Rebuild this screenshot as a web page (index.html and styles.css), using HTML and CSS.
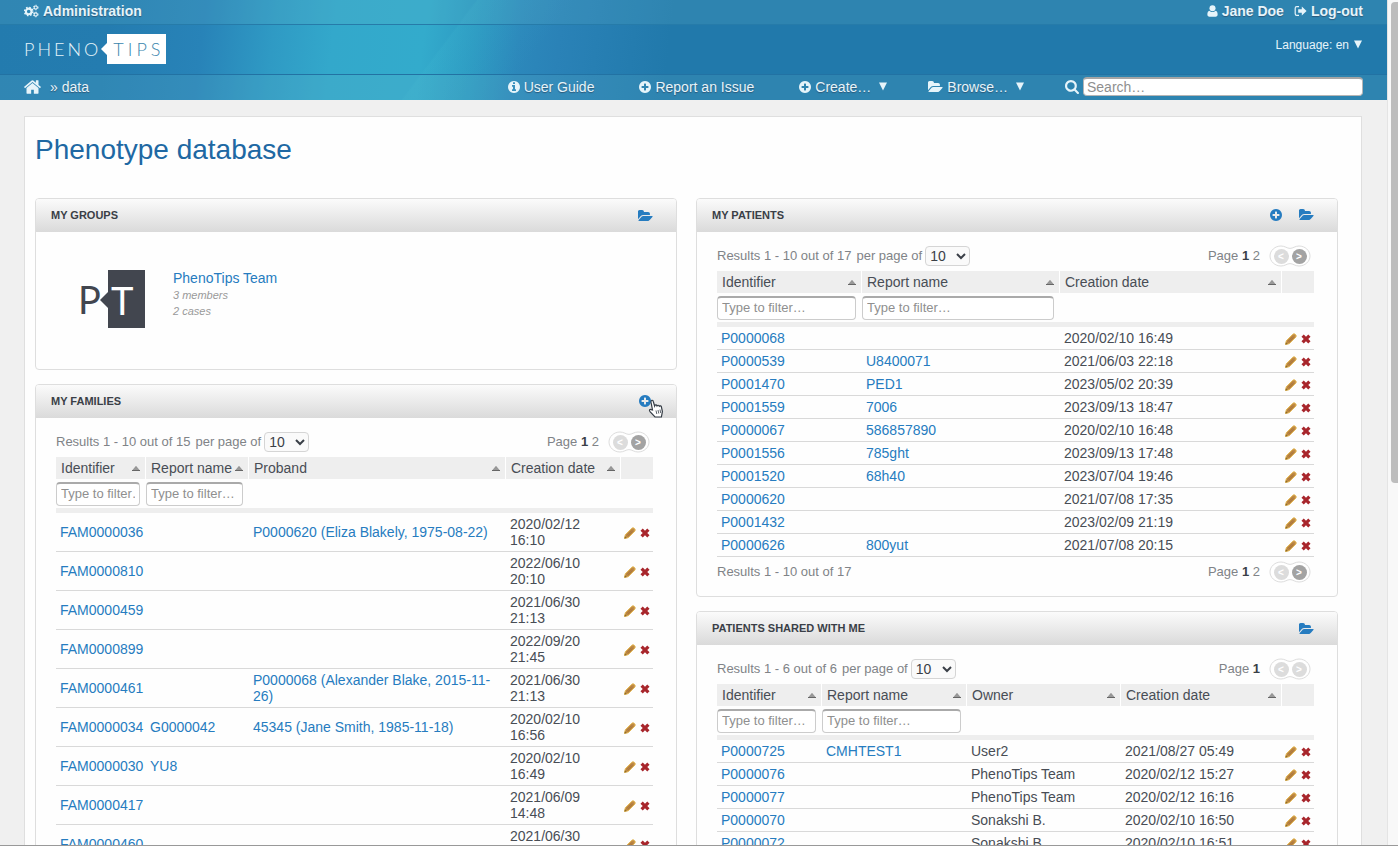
FILE: index.html
```html
<!DOCTYPE html>
<html lang="en">
<head>
    <meta charset="UTF-8">
    <meta name="viewport" content="width=device-width, initial-scale=1.0">
    <title>Phenotype database</title>
    <link rel="stylesheet" href="styles.css">
</head>
<body>
    <!-- Icon definitions -->
    <svg class="icon-defs" aria-hidden="true">
        <symbol id="i-cogs" viewBox="0 0 16 14">
            <circle cx="5" cy="7.500" r="3" fill="none" stroke="currentColor" stroke-width="2.200"/>
            <circle cx="5" cy="7.500" r="4.400" fill="none" stroke="currentColor" stroke-width="1.600" stroke-dasharray="1.730 1.730"/>
            <circle cx="12.500" cy="3.300" r="1.700" fill="none" stroke="currentColor" stroke-width="1.200"/>
            <circle cx="12.500" cy="3.300" r="2.500" fill="none" stroke="currentColor" stroke-width="1" stroke-dasharray="1.300 1.300"/>
            <circle cx="12.500" cy="10.700" r="1.700" fill="none" stroke="currentColor" stroke-width="1.200"/>
            <circle cx="12.500" cy="10.700" r="2.500" fill="none" stroke="currentColor" stroke-width="1" stroke-dasharray="1.300 1.300"/>
        </symbol>
        <symbol id="i-user" viewBox="0 0 12 13">
            <circle cx="6" cy="3.600" r="3.300"/>
            <path d="M2.600 6.200C1 6.500.4 8.300.4 10.400c0 1.500.9 2.400 2.200 2.400h6.800c1.300 0 2.200-.9 2.200-2.400 0-2.100-.6-3.900-2.200-4.200C8.500 7.200 7.300 7.700 6 7.700S3.500 7.200 2.600 6.200z"/>
        </symbol>
        <symbol id="i-logout" viewBox="0 0 13 12">
            <path d="M5 1.700H2.800Q1.200 1.700 1.200 3.300v5.400q0 1.600 1.600 1.600H5" fill="none" stroke="currentColor" stroke-width="1.200"/>
            <path d="M4.200 4.200h3.600V1.600L12.600 6 7.800 10.400V7.800H4.200z"/>
        </symbol>
        <symbol id="i-home" viewBox="80 253 1632 1283">
            <path d="M1472 992v480q0 26-19 45t-45 19h-384v-384h-256v384h-384q-26 0-45-19t-19-45v-480q0-1 .5-3t.5-3l575-474 575 474q1 2 1 6zm223-69l-62 74q-8 9-21 11h-3q-13 0-21-7l-692-577-692 577q-12 8-24 7-13-2-21-11l-62-74q-8-10-7-23.500t11-21.500l719-599q32-26 76-26t76 26l244 204v-195q0-14 9-23t23-9h192q14 0 23 9t9 23v408l219 182q10 8 11 21.500t-7 23.500z"/>
        </symbol>
        <symbol id="i-info" viewBox="128 128 1536 1536">
            <path d="M1152 1376v-160q0-14-9-23t-23-9h-96v-512q0-14-9-23t-23-9h-320q-14 0-23 9t-9 23v160q0 14 9 23t23 9h96v320h-96q-14 0-23 9t-9 23v160q0 14 9 23t23 9h448q14 0 23-9t9-23zm-128-896v-160q0-14-9-23t-23-9h-192q-14 0-23 9t-9 23v160q0 14 9 23t23 9h192q14 0 23-9t9-23zm640 416q0 209-103 385.500t-279.500 279.500-385.500 103-385.500-103-279.500-279.500-103-385.500 103-385.500 279.500-279.500 385.500-103 385.500 103 279.500 279.500 103 385.500z"/>
        </symbol>
        <symbol id="i-plus" viewBox="128 128 1536 1536">
            <path d="M1344 960v-128q0-26-19-45t-45-19h-256v-256q0-26-19-45t-45-19h-128q-26 0-45 19t-19 45v256h-256q-26 0-45 19t-19 45v128q0 26 19 45t45 19h256v256q0 26 19 45t45 19h128q26 0 45-19t19-45v-256h256q26 0 45-19t19-45zm320-64q0 209-103 385.500t-279.500 279.500-385.500 103-385.500-103-279.500-279.500-103-385.500 103-385.500 279.500-279.500 385.500-103 385.500 103 279.500 279.500 103 385.500z"/>
        </symbol>
        <symbol id="i-folder" viewBox="0 128 1815 1408">
            <path d="M1815 952q0 31-31 66l-336 396q-43 51-120.500 86.500t-143.500 35.500h-1088q-34 0-60.500-13t-26.500-43q0-31 31-66l336-396q43-51 120.500-86.500t143.500-35.500h1088q34 0 60.500 13t26.500 43zm-343-344v160h-832q-94 0-197 47.500t-164 119.500l-337 396-5 6q0-4-.5-12.500t-.5-12.500v-960q0-92 66-158t158-66h320q92 0 158 66t66 158v32h544q92 0 158 66t66 158z"/>
        </symbol>
        <symbol id="i-search" viewBox="64 128 1664 1664">
            <path d="M1216 832q0-185-131.500-316.500t-316.500-131.500-316.500 131.500-131.500 316.500 131.500 316.500 316.500 131.500 316.500-131.500 131.500-316.500zm512 832q0 52-38 90t-90 38q-54 0-90-38l-343-342q-179 124-399 124-143 0-273.500-55.500t-225-150-150-225-55.500-273.500 55.500-273.500 150-225 225-150 273.500-55.500 273.500 55.500 225 150 150 225 55.500 273.500q0 220-124 399l343 343q37 37 37 90z"/>
        </symbol>
        <symbol id="i-down" viewBox="0 0 10 9">
            <path d="M1 .5h8L5 8.500z"/>
        </symbol>
        <symbol id="i-sort" viewBox="0 0 8 5">
            <path d="M4 .3L7.500 4.500h-7z" fill="#999" stroke="#777" stroke-width=".5"/>
            <path d="M0 4.500h8" stroke="#666" stroke-width="1"/>
        </symbol>
        <symbol id="i-edit" viewBox="0 0 12 12">
            <path d="M.5 11.500L1.300 7.800 7.800 1.300q1.200-1.100 2.400 0l.5.5q1.100 1.200 0 2.400L4.200 10.700z" fill="#c08a45" stroke="#e3b64f" stroke-width="1"/>
            <path d="M2.800 8.600L8 3.400M3.900 9.400l5-5" stroke="#a06c38" stroke-width=".8"/>
            <path d="M.4 11.600l.6-2.400 1.800 1.800z" fill="#8a6a2c"/>
        </symbol>
        <symbol id="i-delete" viewBox="0 0 10 10">
            <path d="M1.600 1.600l6.800 6.800M8.400 1.600L1.600 8.400" stroke="#a8262c" stroke-width="3.200"/>
        </symbol>
        <symbol id="i-pager" viewBox="0 0 42 22">
            <path d="M12 1C6 1 1 5.500 1 11s5 10 11 10c4 0 6-2.400 9-2.400s5 2.400 9 2.400c6 0 11-4.500 11-10S36 1 30 1c-4 0-6 2.400-9 2.400S16 1 12 1z" fill="#fff" stroke="#ddd"/>
        </symbol>
    </svg>

    <div class="page">
        <header class="site-header">
            <div class="top-bar">
                <a href="#" class="header-link"><svg class="icon-cogs"><use href="#i-cogs"/></svg>Administration</a>
                <div class="user-links">
                    <a href="#" class="header-link"><svg class="icon-user"><use href="#i-user"/></svg>Jane Doe</a>
                    <a href="#" class="header-link"><svg class="icon-logout"><use href="#i-logout"/></svg>Log-out</a>
                </div>
            </div>
            <div class="brand-bar">
                <a href="#" class="brand"><span class="brand-left">PHENO</span><svg class="brand-arrow" viewBox="0 0 6 12"><path d="M6 0v12L0 6z"/></svg><span class="brand-right">TIPS</span></a>
                <button type="button" class="language">Language: en <svg class="icon-down"><use href="#i-down"/></svg></button>
            </div>
            <nav class="nav-bar">
                <div class="breadcrumb">
                    <a href="#" aria-label="Home"><svg class="icon-home"><use href="#i-home"/></svg></a>
                    <span>» <a href="#">data</a></span>
                </div>
                <div class="nav-items">
                    <a href="#" class="nav-link"><svg class="icon-round"><use href="#i-info"/></svg>User Guide</a>
                    <a href="#" class="nav-link"><svg class="icon-round"><use href="#i-plus"/></svg>Report an Issue</a>
                    <button type="button" class="nav-menu"><svg class="icon-round"><use href="#i-plus"/></svg>Create… <svg class="icon-down"><use href="#i-down"/></svg></button>
                    <button type="button" class="nav-menu"><svg class="icon-folder"><use href="#i-folder"/></svg>Browse… <svg class="icon-down"><use href="#i-down"/></svg></button>
                    <form class="search">
                        <label for="search" aria-label="Search"><svg class="icon-search"><use href="#i-search"/></svg></label>
                        <input type="text" id="search" placeholder="Search…">
                    </form>
                </div>
            </nav>
        </header>

        <main class="content">
            <h1>Phenotype database</h1>
            <div class="dashboard">
                <div class="column">
                    <section class="gadget">
                        <div class="gadget-head">
                            <h2>MY GROUPS</h2>
                            <div class="gadget-actions">
                                <a href="#" aria-label="Browse groups"><svg class="icon-folder"><use href="#i-folder"/></svg></a>
                            </div>
                        </div>
                        <div class="group">
                            <svg class="group-logo" viewBox="0 0 65 58">
                                <path d="M28 0h37v58H28V38l-8-8 8-8z" fill="#42464f"/>
                                <text x="-2" y="44" class="group-logo-p">P</text>
                                <text x="31" y="45" class="group-logo-t">T</text>
                            </svg>
                            <div class="group-info">
                                <a href="#">PhenoTips Team</a>
                                <em>3 members</em>
                                <em>2 cases</em>
                            </div>
                        </div>
                    </section>

                    <section class="gadget">
                        <div class="gadget-head">
                            <h2>MY FAMILIES</h2>
                            <div class="gadget-actions">
                                <a href="#" class="hovered" aria-label="New family"><svg class="icon-round"><use href="#i-plus"/></svg>
                                    <svg class="cursor" viewBox="0 0 16 19"><path d="M4.500 11L3 3.200C2.700 1 4.800.5 5.300 2.500L6.600 7c.5-1.500 2-1.300 2.400-.1.600-1 1.900-.8 2.300.3.800-.7 1.900-.3 2.100.8l1 4.500-1 5.500H7L2 12.700C.8 11 2 9.800 3.200 10.600z" fill="#fff" stroke="#333b44" stroke-width="1.200"/><path d="M8 11.500l.8 3.500M10 11l.8 3.500M12 10.500l.7 3.500" stroke="#333b44" stroke-width=".8"/></svg></a>
                            </div>
                        </div>
                        <div class="gadget-body">
                            <div class="pagination">
                                <span>Results 1 - 10 out of 15</span>
                                <label>per page of <select><option>10</option></select></label>
                                <span class="page-list">Page <b>1</b> 2</span>
                                <span class="pager"><svg><use href="#i-pager"/></svg><button type="button" disabled>&lt;</button><button type="button">&gt;</button></span>
                            </div>
                            <table>
                                <colgroup><col class="w-90"><col class="w-103"><col><col class="w-115"><col class="w-32"></colgroup>
                                <thead>
                                    <tr class="titles">
                                        <th><button type="button">Identifier<svg><use href="#i-sort"/></svg></button></th>
                                        <th><button type="button">Report name<svg><use href="#i-sort"/></svg></button></th>
                                        <th><button type="button">Proband<svg><use href="#i-sort"/></svg></button></th>
                                        <th><button type="button">Creation date<svg><use href="#i-sort"/></svg></button></th>
                                        <th></th>
                                    </tr>
                                    <tr class="filters">
                                        <td><input type="text" aria-label="Filter by identifier" placeholder="Type to filter…"></td>
                                        <td><input type="text" aria-label="Filter by report name" placeholder="Type to filter…"></td>
                                        <td></td>
                                        <td></td>
                                        <td></td>
                                    </tr>
                                </thead>
                                <tbody>
                                    <tr><td><a href="#">FAM0000036</a></td><td></td><td><a href="#">P0000620 (Eliza Blakely, 1975-08-22)</a></td><td>2020/02/12 16:10</td><td class="actions"><a href="#" aria-label="Edit"><svg><use href="#i-edit"/></svg></a><a href="#" aria-label="Delete"><svg><use href="#i-delete"/></svg></a></td></tr>
                                    <tr><td><a href="#">FAM0000810</a></td><td></td><td></td><td>2022/06/10 20:10</td><td class="actions"><a href="#" aria-label="Edit"><svg><use href="#i-edit"/></svg></a><a href="#" aria-label="Delete"><svg><use href="#i-delete"/></svg></a></td></tr>
                                    <tr><td><a href="#">FAM0000459</a></td><td></td><td></td><td>2021/06/30 21:13</td><td class="actions"><a href="#" aria-label="Edit"><svg><use href="#i-edit"/></svg></a><a href="#" aria-label="Delete"><svg><use href="#i-delete"/></svg></a></td></tr>
                                    <tr><td><a href="#">FAM0000899</a></td><td></td><td></td><td>2022/09/20 21:45</td><td class="actions"><a href="#" aria-label="Edit"><svg><use href="#i-edit"/></svg></a><a href="#" aria-label="Delete"><svg><use href="#i-delete"/></svg></a></td></tr>
                                    <tr><td><a href="#">FAM0000461</a></td><td></td><td><a href="#">P0000068 (Alexander Blake, 2015-11-26)</a></td><td>2021/06/30 21:13</td><td class="actions"><a href="#" aria-label="Edit"><svg><use href="#i-edit"/></svg></a><a href="#" aria-label="Delete"><svg><use href="#i-delete"/></svg></a></td></tr>
                                    <tr><td><a href="#">FAM0000034</a></td><td><a href="#">G0000042</a></td><td><a href="#">45345 (Jane Smith, 1985-11-18)</a></td><td>2020/02/10 16:56</td><td class="actions"><a href="#" aria-label="Edit"><svg><use href="#i-edit"/></svg></a><a href="#" aria-label="Delete"><svg><use href="#i-delete"/></svg></a></td></tr>
                                    <tr><td><a href="#">FAM0000030</a></td><td><a href="#">YU8</a></td><td></td><td>2020/02/10 16:49</td><td class="actions"><a href="#" aria-label="Edit"><svg><use href="#i-edit"/></svg></a><a href="#" aria-label="Delete"><svg><use href="#i-delete"/></svg></a></td></tr>
                                    <tr><td><a href="#">FAM0000417</a></td><td></td><td></td><td>2021/06/09 14:48</td><td class="actions"><a href="#" aria-label="Edit"><svg><use href="#i-edit"/></svg></a><a href="#" aria-label="Delete"><svg><use href="#i-delete"/></svg></a></td></tr>
                                    <tr><td><a href="#">FAM0000460</a></td><td></td><td></td><td>2021/06/30 21:13</td><td class="actions"><a href="#" aria-label="Edit"><svg><use href="#i-edit"/></svg></a><a href="#" aria-label="Delete"><svg><use href="#i-delete"/></svg></a></td></tr>
                                </tbody>
                            </table>
                        </div>
                    </section>
                </div>

                <div class="column">
                    <section class="gadget">
                        <div class="gadget-head">
                            <h2>MY PATIENTS</h2>
                            <div class="gadget-actions">
                                <a href="#" aria-label="New patient"><svg class="icon-round"><use href="#i-plus"/></svg></a>
                                <a href="#" aria-label="Browse patients"><svg class="icon-folder"><use href="#i-folder"/></svg></a>
                            </div>
                        </div>
                        <div class="gadget-body">
                            <div class="pagination">
                                <span>Results 1 - 10 out of 17</span>
                                <label>per page of <select><option>10</option></select></label>
                                <span class="page-list">Page <b>1</b> 2</span>
                                <span class="pager"><svg><use href="#i-pager"/></svg><button type="button" disabled>&lt;</button><button type="button">&gt;</button></span>
                            </div>
                            <table>
                                <colgroup><col class="w-145"><col class="w-198"><col><col class="w-32"></colgroup>
                                <thead>
                                    <tr class="titles">
                                        <th><button type="button">Identifier<svg><use href="#i-sort"/></svg></button></th>
                                        <th><button type="button">Report name<svg><use href="#i-sort"/></svg></button></th>
                                        <th><button type="button">Creation date<svg><use href="#i-sort"/></svg></button></th>
                                        <th></th>
                                    </tr>
                                    <tr class="filters">
                                        <td><input type="text" aria-label="Filter by identifier" placeholder="Type to filter…"></td>
                                        <td><input type="text" aria-label="Filter by report name" placeholder="Type to filter…"></td>
                                        <td></td>
                                        <td></td>
                                    </tr>
                                </thead>
                                <tbody>
                                    <tr><td><a href="#">P0000068</a></td><td></td><td>2020/02/10 16:49</td><td class="actions"><a href="#" aria-label="Edit"><svg><use href="#i-edit"/></svg></a><a href="#" aria-label="Delete"><svg><use href="#i-delete"/></svg></a></td></tr>
                                    <tr><td><a href="#">P0000539</a></td><td><a href="#">U8400071</a></td><td>2021/06/03 22:18</td><td class="actions"><a href="#" aria-label="Edit"><svg><use href="#i-edit"/></svg></a><a href="#" aria-label="Delete"><svg><use href="#i-delete"/></svg></a></td></tr>
                                    <tr><td><a href="#">P0001470</a></td><td><a href="#">PED1</a></td><td>2023/05/02 20:39</td><td class="actions"><a href="#" aria-label="Edit"><svg><use href="#i-edit"/></svg></a><a href="#" aria-label="Delete"><svg><use href="#i-delete"/></svg></a></td></tr>
                                    <tr><td><a href="#">P0001559</a></td><td><a href="#">7006</a></td><td>2023/09/13 18:47</td><td class="actions"><a href="#" aria-label="Edit"><svg><use href="#i-edit"/></svg></a><a href="#" aria-label="Delete"><svg><use href="#i-delete"/></svg></a></td></tr>
                                    <tr><td><a href="#">P0000067</a></td><td><a href="#">586857890</a></td><td>2020/02/10 16:48</td><td class="actions"><a href="#" aria-label="Edit"><svg><use href="#i-edit"/></svg></a><a href="#" aria-label="Delete"><svg><use href="#i-delete"/></svg></a></td></tr>
                                    <tr><td><a href="#">P0001556</a></td><td><a href="#">785ght</a></td><td>2023/09/13 17:48</td><td class="actions"><a href="#" aria-label="Edit"><svg><use href="#i-edit"/></svg></a><a href="#" aria-label="Delete"><svg><use href="#i-delete"/></svg></a></td></tr>
                                    <tr><td><a href="#">P0001520</a></td><td><a href="#">68h40</a></td><td>2023/07/04 19:46</td><td class="actions"><a href="#" aria-label="Edit"><svg><use href="#i-edit"/></svg></a><a href="#" aria-label="Delete"><svg><use href="#i-delete"/></svg></a></td></tr>
                                    <tr><td><a href="#">P0000620</a></td><td></td><td>2021/07/08 17:35</td><td class="actions"><a href="#" aria-label="Edit"><svg><use href="#i-edit"/></svg></a><a href="#" aria-label="Delete"><svg><use href="#i-delete"/></svg></a></td></tr>
                                    <tr><td><a href="#">P0001432</a></td><td></td><td>2023/02/09 21:19</td><td class="actions"><a href="#" aria-label="Edit"><svg><use href="#i-edit"/></svg></a><a href="#" aria-label="Delete"><svg><use href="#i-delete"/></svg></a></td></tr>
                                    <tr><td><a href="#">P0000626</a></td><td><a href="#">800yut</a></td><td>2021/07/08 20:15</td><td class="actions"><a href="#" aria-label="Edit"><svg><use href="#i-edit"/></svg></a><a href="#" aria-label="Delete"><svg><use href="#i-delete"/></svg></a></td></tr>
                                </tbody>
                            </table>
                            <div class="pagination pagination-bottom">
                                <span>Results 1 - 10 out of 17</span>
                                <span class="page-list">Page <b>1</b> 2</span>
                                <span class="pager"><svg><use href="#i-pager"/></svg><button type="button" disabled>&lt;</button><button type="button">&gt;</button></span>
                            </div>
                        </div>
                    </section>

                    <section class="gadget">
                        <div class="gadget-head">
                            <h2>PATIENTS SHARED WITH ME</h2>
                            <div class="gadget-actions">
                                <a href="#" aria-label="Browse shared patients"><svg class="icon-folder"><use href="#i-folder"/></svg></a>
                            </div>
                        </div>
                        <div class="gadget-body">
                            <div class="pagination">
                                <span>Results 1 - 6 out of 6</span>
                                <label>per page of <select><option>10</option></select></label>
                                <span class="page-list">Page <b>1</b></span>
                                <span class="pager"><svg><use href="#i-pager"/></svg><button type="button" disabled>&lt;</button><button type="button" disabled>&gt;</button></span>
                            </div>
                            <table>
                                <colgroup><col class="w-105"><col class="w-145"><col class="w-154"><col><col class="w-32"></colgroup>
                                <thead>
                                    <tr class="titles">
                                        <th><button type="button">Identifier<svg><use href="#i-sort"/></svg></button></th>
                                        <th><button type="button">Report name<svg><use href="#i-sort"/></svg></button></th>
                                        <th><button type="button">Owner<svg><use href="#i-sort"/></svg></button></th>
                                        <th><button type="button">Creation date<svg><use href="#i-sort"/></svg></button></th>
                                        <th></th>
                                    </tr>
                                    <tr class="filters">
                                        <td><input type="text" aria-label="Filter by identifier" placeholder="Type to filter…"></td>
                                        <td><input type="text" aria-label="Filter by report name" placeholder="Type to filter…"></td>
                                        <td></td>
                                        <td></td>
                                        <td></td>
                                    </tr>
                                </thead>
                                <tbody>
                                    <tr><td><a href="#">P0000725</a></td><td><a href="#">CMHTEST1</a></td><td>User2</td><td>2021/08/27 05:49</td><td class="actions"><a href="#" aria-label="Edit"><svg><use href="#i-edit"/></svg></a><a href="#" aria-label="Delete"><svg><use href="#i-delete"/></svg></a></td></tr>
                                    <tr><td><a href="#">P0000076</a></td><td></td><td>PhenoTips Team</td><td>2020/02/12 15:27</td><td class="actions"><a href="#" aria-label="Edit"><svg><use href="#i-edit"/></svg></a><a href="#" aria-label="Delete"><svg><use href="#i-delete"/></svg></a></td></tr>
                                    <tr><td><a href="#">P0000077</a></td><td></td><td>PhenoTips Team</td><td>2020/02/12 16:16</td><td class="actions"><a href="#" aria-label="Edit"><svg><use href="#i-edit"/></svg></a><a href="#" aria-label="Delete"><svg><use href="#i-delete"/></svg></a></td></tr>
                                    <tr><td><a href="#">P0000070</a></td><td></td><td>Sonakshi B.</td><td>2020/02/10 16:50</td><td class="actions"><a href="#" aria-label="Edit"><svg><use href="#i-edit"/></svg></a><a href="#" aria-label="Delete"><svg><use href="#i-delete"/></svg></a></td></tr>
                                    <tr><td><a href="#">P0000072</a></td><td></td><td>Sonakshi B.</td><td>2020/02/10 16:51</td><td class="actions"><a href="#" aria-label="Edit"><svg><use href="#i-edit"/></svg></a><a href="#" aria-label="Delete"><svg><use href="#i-delete"/></svg></a></td></tr>
                                </tbody>
                            </table>
                        </div>
                    </section>
                </div>
            </div>
        </main>
    </div>
    <div class="scroll-track"><div class="scroll-thumb"></div></div>
</body>
</html>
```
FILE: styles.css
```css
/* General Styles */
* {
    box-sizing: border-box;
}

body {
    font-family: "Liberation Sans", Arial, sans-serif;
    font-size: 14px;
    line-height: 16px;
    color: #484d55;
    margin: 0;
    display: flex;
    height: 100vh;
    overflow: hidden;
    background-color: #f0f0f0;
    border-bottom: 1px solid #999;
}

a {
    color: #267cc0;
    text-decoration: none;
}

button {
    font: inherit;
    color: inherit;
    background: none;
    border: none;
    padding: 0;
    cursor: pointer;
}

svg {
    display: block;
    fill: currentColor;
    flex: none;
}

.icon-defs {
    position: absolute;
    width: 0;
    height: 0;
}

.page {
    flex: 1;
    min-width: 0;
    display: flex;
    flex-direction: column;
}

/* Scrollbar */
.scroll-track {
    width: 11px;
    padding: 2px 0 0 3px;
    background: #f8f8f8;
    border-left: 1px solid #e4e4e4;
}

.scroll-thumb {
    height: 57%;
    border-radius: 4px 0 0 4px;
    background: #bdbdbd;
}

/* Header */
.site-header {
    flex: none;
    color: #e6f4fa;
    background:
        linear-gradient(127deg, rgba(255, 255, 255, 0) 380px, rgba(70, 195, 215, 0.12) 382px, rgba(70, 195, 215, 0) 460px),
        linear-gradient(97deg, #237bae 0, #247cb0 110px, #2883b8 205px, #2f9ac4 275px, #33a8cb 335px, #33abcc 425px, #2d9ac2 475px, #2c88bb 520px, #2a82b7 560px, #2179ab 670px);
}

.site-header a {
    color: inherit;
}

.top-bar,
.brand-bar,
.nav-bar {
    display: flex;
    justify-content: space-between;
    align-items: center;
    padding: 0 24px;
}

.top-bar,
.nav-bar {
    padding-bottom: 2px;
    background: rgba(100, 180, 200, 0.2);
    text-shadow: 0 1px 1px #2c5878;
}

.top-bar {
    height: 24px;
    font-weight: bold;
}

.header-link,
.nav-link,
.nav-menu {
    display: flex;
    align-items: center;
    gap: 4px;
    text-shadow: inherit;
}

.user-links {
    display: flex;
    gap: 10px;
}

.brand-bar {
    height: 51px;
    padding-bottom: 2px;
    border-top: 1px solid #267ba9;
    border-bottom: 1px solid #2272a3;
}

.brand {
    display: flex;
    align-items: center;
    font-family: Lato, "Open Sans", sans-serif;
    font-size: 18px;
    font-weight: 300;
    line-height: 30px;
    letter-spacing: 4px;
}

.brand-left {
    letter-spacing: 3px;
}

.brand-arrow {
    width: 6px;
    height: 12px;
    fill: #fff;
}

.brand-right {
    padding: 0 2px 0 6px;
    background: #fff;
    color: #3a86ae;
}

.language {
    display: flex;
    align-items: center;
    gap: 4px;
    font-size: 12px;
    padding-bottom: 8px;
}

.nav-bar {
    height: 25px;
}

.breadcrumb {
    display: flex;
    align-items: center;
    gap: 9px;
}

.nav-items {
    display: flex;
    align-items: center;
    gap: 40px;
}

.nav-link {
    margin-right: 5px;
}

.nav-menu .icon-down {
    margin-left: 3px;
}

.search {
    display: flex;
    align-items: center;
    gap: 4px;
}

.search input {
    width: 280px;
    height: 19px;
    font: inherit;
    padding: 0 3px;
    border: 1px solid #b5b5b5;
    border-top: 2px solid #a5a5a5;
    border-radius: 4px;
    background: #fff;
}

input::placeholder {
    color: #8f8f8f;
    opacity: 1;
}

/* Icons */
.icon-cogs {
    width: 15px;
    height: 14px;
}

.icon-user {
    width: 11px;
    height: 12px;
}

.icon-logout {
    width: 13px;
    height: 12px;
}

.icon-home {
    width: 17px;
    height: 14px;
}

.icon-round {
    width: 12px;
    height: 12px;
}

.icon-folder {
    width: 15px;
    height: 11px;
}

.icon-search {
    width: 14px;
    height: 14px;
}

.icon-down {
    width: 10px;
    height: 9px;
}

/* Content */
.content {
    flex: 1;
    min-height: 0;
    overflow: hidden;
    margin: 16px 25px 0 24px;
    padding: 13px 23px 0 10px;
    background: #fefefe;
    border: 1px solid #dfdfdf;
    border-bottom: none;
}

h1 {
    margin: 0 0 28px;
    font-size: 28px;
    line-height: 40px;
    font-weight: normal;
    color: #2068a3;
}

.dashboard {
    display: grid;
    grid-template-columns: 1fr 1fr;
    gap: 19px;
    align-items: start;
}

.column {
    display: flex;
    flex-direction: column;
    gap: 14px;
    min-width: 0;
}

.gadget {
    border: 1px solid #dedede;
    border-radius: 4px;
}

.gadget-head {
    display: flex;
    justify-content: space-between;
    align-items: center;
    height: 33px;
    padding: 0 16px 0 15px;
    border-radius: 3px 3px 0 0;
    background: linear-gradient(#fbfbfb, #dadada);
}

h2 {
    margin: 0 0 2px;
    font-size: 11px;
    line-height: 16px;
    color: #3a3f47;
}

.gadget-actions {
    display: flex;
    margin-bottom: 1px;
}

.gadget-actions a {
    display: flex;
    justify-content: center;
    width: 30px;
}

.hovered {
    position: relative;
}

.cursor {
    position: absolute;
    left: 18px;
    top: 4px;
    width: 16px;
    height: 19px;
}

/* Groups */
.group {
    display: flex;
    gap: 28px;
    padding: 38px 44px 41px;
}

.group-logo {
    width: 65px;
    height: 58px;
}

.group-logo-p,
.group-logo-t {
    font-family: Lato, "Open Sans", sans-serif;
    font-size: 38px;
    fill: #42464f;
}

.group-logo-t {
    fill: #fff;
}

.group-info {
    display: flex;
    flex-direction: column;
}

.group-info a {
    margin-bottom: 1px;
}

.group-info em {
    font-size: 11px;
    color: #9a9a9a;
}

/* Live tables */
.gadget-body {
    padding: 12px 23px 12px 20px;
}

.pagination {
    display: flex;
    align-items: center;
    height: 24px;
    margin-bottom: 3px;
    font-size: 13px;
    color: #808387;
}

.pagination-bottom {
    margin: 3px 0 0;
}

.pagination label {
    display: flex;
    align-items: center;
    gap: 3px;
    margin-left: 5px;
}

.pagination select {
    width: 45px;
    height: 20px;
    font: inherit;
    font-size: 14px;
    color: #3a3f47;
    padding: 0;
    background: #fafafa;
    border: 1px solid #d5d5d5;
    border-radius: 4px;
}

.page-list {
    margin-left: auto;
}

.page-list b {
    color: #3a3f47;
}

.pager {
    position: relative;
    display: flex;
    justify-content: center;
    align-items: center;
    gap: 3px;
    width: 42px;
    height: 22px;
    margin: 0 3px 0 9px;
}

.pager svg {
    position: absolute;
    width: 42px;
    height: 22px;
}

.pager button {
    position: relative;
    width: 15px;
    height: 15px;
    border-radius: 50%;
    font-size: 10px;
    line-height: 15px;
    font-weight: bold;
    color: #fff;
    background: #a3a3a3;
}

.pager button:disabled {
    background: #dcdcdc;
}

table {
    width: 100%;
    table-layout: fixed;
    border-collapse: separate;
    border-spacing: 0;
}

.w-32 { width: 32px; }
.w-90 { width: 90px; }
.w-103 { width: 103px; }
.w-105 { width: 105px; }
.w-115 { width: 115px; }
.w-145 { width: 145px; }
.w-154 { width: 154px; }
.w-198 { width: 198px; }

.titles th {
    height: 22px;
    padding: 0 5px;
    font-weight: normal;
    background: #eee;
    border-right: 1px solid #fff;
}

.titles th:last-child {
    border-right: none;
}

.titles button {
    display: flex;
    justify-content: space-between;
    align-items: center;
    width: 100%;
    white-space: nowrap;
}

.titles svg {
    width: 8px;
    height: 5px;
}

.filters td {
    height: 34px;
    padding: 3px 6px 2px 0;
    border-bottom: 5px solid #eee;
}

.filters input {
    display: block;
    width: 100%;
    height: 24px;
    padding: 0 4px 2px;
    font: inherit;
    font-size: 13px;
    background: #fff;
    border: 1px solid #ccc;
    border-top: 2px solid #aaa;
    border-radius: 4px;
}

tbody td {
    padding: 3px 4px;
    vertical-align: middle;
    border-bottom: 1px solid #d9d9d9;
}

tbody .actions {
    padding: 3px 0 3px 3px;
    line-height: 14px;
}

.actions a {
    display: inline-block;
    vertical-align: middle;
    margin-right: 4px;
}

.actions a:last-child {
    margin-right: 0;
}

.actions svg {
    width: 12px;
    height: 12px;
}

.actions a:last-child svg {
    width: 10px;
    height: 10px;
}
```
